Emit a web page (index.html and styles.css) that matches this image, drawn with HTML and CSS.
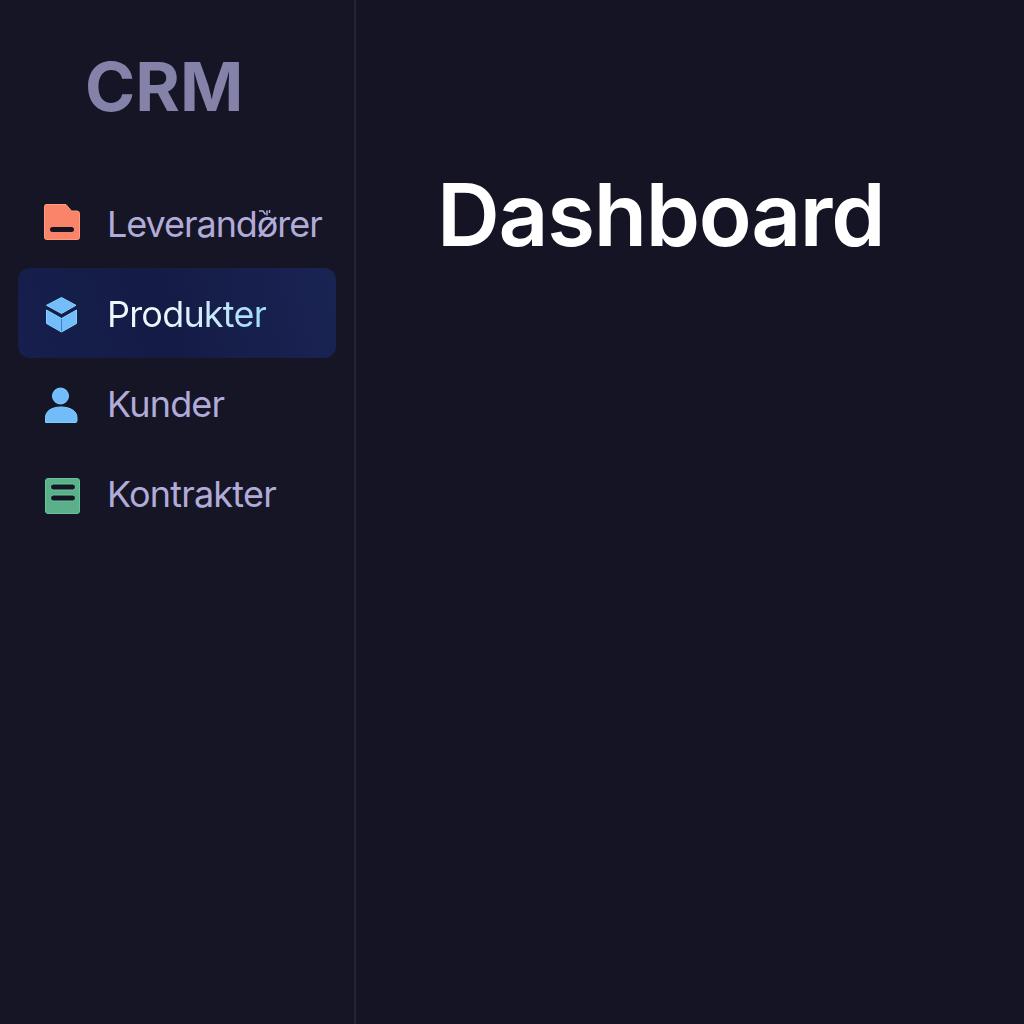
FILE: index.html
```html
<!DOCTYPE html>
<html lang="da">
<head>
<meta charset="utf-8">
<title>CRM</title>
<link rel="stylesheet" href="styles.css">
</head>
<body>
<div class="app">
  <aside class="sidebar">
    <div class="brand">CRM</div>
    <nav class="nav">
      <a class="item">
        <svg class="icon" viewBox="0 0 40 40"><path fill="#f98469" stroke="#ff9c7d" d="M5 1.500H25L30.500 8H36Q38.500 8 38.500 10.500V34.500Q38.500 36.500 36.500 36.500H5.500Q3.500 36.500 3.500 34.500V3.500Q3.500 1.500 5.500 1.500Z"/><rect x="9" y="24" width="24" height="5" rx="2.500" fill="#141425"/></svg>
        <span class="label suppliers">Leverandører<svg class="accent" viewBox="0 0 12 6"><path d="M0 1H4L6.500 4.500M8 0.500V5.500M10.500 0V3"/></svg></span>
      </a>
      <a class="item active">
        <svg class="icon" viewBox="0 0 40 40"><path fill="#74bdfb" stroke="#83d2ff" d="M20.500 4.500 35 12.300 20.500 20.500 5.500 12.300ZM5.500 17 20.500 25.500 35.500 17V30.500L20.500 39 5.500 30.500Z"/><path stroke="#3e82bd" d="M20.500 26V38.500"/></svg>
        <span class="label">Produkter</span>
      </a>
      <a class="item">
        <svg class="icon" viewBox="0 0 40 40"><g fill="#72bcf9" stroke="#78d0ff"><circle cx="19.500" cy="13" r="8"/><path d="M4.500 39.500V34.500C4.500 28 11 24 20 24S36 28 36 34.500V37Q36 39.500 35 39.500Z"/></g></svg>
        <span class="label">Kunder</span>
      </a>
      <a class="item">
        <svg class="icon" viewBox="0 0 40 40"><rect x="4.500" y="5.500" width="34" height="35" rx="2.500" fill="#5caf8b" stroke="#65c799"/><g fill="#141425" stroke="#65c799"><rect x="9.500" y="11" width="25" height="6" rx="3"/><rect x="9.500" y="22" width="25" height="6" rx="3"/></g></svg>
        <span class="label">Kontrakter</span>
      </a>
    </nav>
  </aside>
  <main class="main">
    <h1 class="title">Dashboard</h1>
  </main>
</div>
</body>
</html>
```
FILE: styles.css
```css
* { box-sizing: border-box; }
body { margin: 0; background: #141425; font-family: Inter, "Liberation Sans", sans-serif; }
.app { display: flex; height: 100vh; }
.sidebar { width: 356px; flex: none; border-right: 2px solid #242438; background: #151526; padding: 46px 18px 0; }
.brand { height: 132px; padding-left: 67px; font-size: 68px; line-height: 80px; font-weight: 700; color: #8582aa; }
.nav { display: flex; flex-direction: column; }
.item { display: flex; align-items: center; gap: 26px; height: 90px; padding-left: 23px; border-radius: 12px; color: #b1abd9; }
.active { background: linear-gradient(75deg, #161f4d, #141b45 45%, #1a2453); }
.icon { width: 40px; height: 40px; flex: none; fill: none; overflow: visible; }
.label { position: relative; font-size: 36px; line-height: 44px; letter-spacing: -0.8px; white-space: nowrap; margin-top: 2px; font-weight: 380; }
.suppliers { letter-spacing: -1.05px; }
.active .label { color: transparent; background: linear-gradient(90deg, #eef6ff 35%, #9fdcfa); -webkit-background-clip: text; background-clip: text; }
.accent { position: absolute; left: 152px; top: 8px; width: 12px; height: 6px; fill: none; stroke: #b1abd9; stroke-width: 1.5; }
.main { flex: 1; padding: 162px 0 0 81px; }
.title { margin: 0; font-size: 87px; line-height: 106px; font-weight: 640; letter-spacing: -1.3px; color: #fff; }
```
